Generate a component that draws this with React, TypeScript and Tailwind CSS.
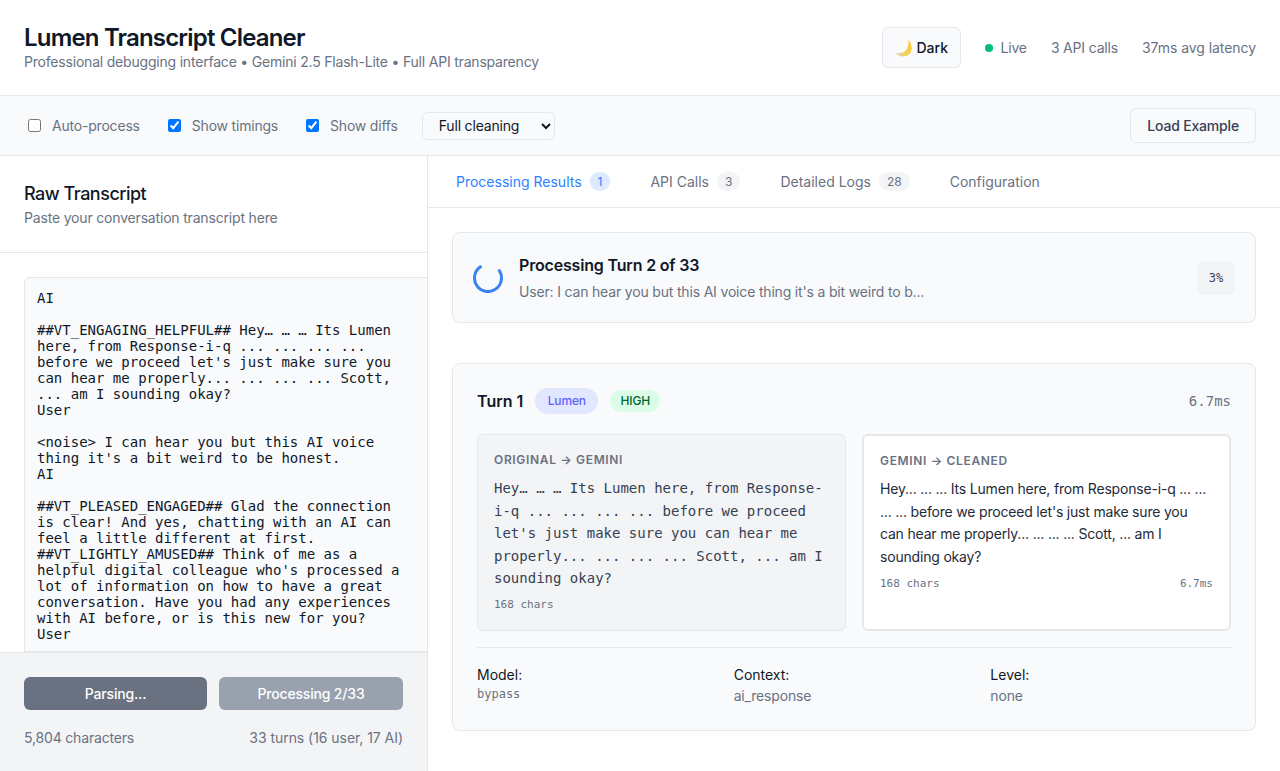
const transcript = `AI

##VT_ENGAGING_HELPFUL## Hey… … … Its Lumen here, from Response-i-q ... ... ... ... before we proceed let's just make sure you can hear me properly... ... ... ... Scott, ... am I sounding okay?
User

<noise> I can hear you but this AI voice thing it's a bit weird to be honest.
AI

##VT_PLEASED_ENGAGED## Glad the connection is clear! And yes, chatting with an AI can feel a little different at first. ##VT_LIGHTLY_AMUSED## Think of me as a helpful digital colleague who's processed a lot of information on how to have a great conversation. Have you had any experiences with AI before, or is this new for you?
User`;

const sans = "font-['Inter',sans-serif]";
const mono = "font-['DejaVu_Sans_Mono',monospace] tracking-normal";

function MoonIcon() {
  return (
    <svg width="18" height="18" viewBox="0 0 18 18" className="shrink-0">
      <defs>
        <linearGradient id="moon" x1="0" y1="1" x2="1" y2="0">
          <stop offset="0" stopColor="#d8d2bc" />
          <stop offset="0.4" stopColor="#f7cf5a" />
          <stop offset="1" stopColor="#ffc928" />
        </linearGradient>
      </defs>
      <path
        d="M13 .5C17.5 5 18 12 14 15.5 10 18.5 4 18 .5 14 5.500 15 9.500 13.500 11.500 10.500 13.500 8 14 4 13 .5Z"
        fill="url(#moon)"
      />
    </svg>
  );
}

function Spinner() {
  return (
    <svg width="30" height="30" viewBox="0 0 30 30" className="shrink-0">
      <circle
        cx="15"
        cy="15"
        r="13.5"
        fill="none"
        stroke="#3b82f6"
        strokeWidth="3"
        strokeLinecap="round"
        strokeDasharray="63 85"
        transform="rotate(-33 15 15)"
      />
    </svg>
  );
}

function Tab({ label, count, active }: { label: string; count?: number; active?: boolean }) {
  return (
    <div className={`flex items-center gap-2 text-sm tracking-normal ${active ? 'text-blue-500' : 'text-gray-500'}`}>
      <span>{label}</span>
      {count !== undefined && (
        <span className={`flex h-[19px] items-center rounded-full px-2 text-xs ${active ? 'bg-blue-100 text-blue-500' : 'bg-gray-100 text-gray-500'}`}>
          {count}
        </span>
      )}
    </div>
  );
}

function Check({ label, checked }: { label: string; checked?: boolean }) {
  return (
    <label className="flex items-center gap-2 text-sm tracking-[-0.2px] text-gray-500">
      <input type="checkbox" defaultChecked={checked} className="my-[3px] mr-[3px] ml-1 h-[13px] w-[13px]" />
      <span>{label}</span>
    </label>
  );
}

function Meta({ label, value, code }: { label: string; value: string; code?: boolean }) {
  return (
    <div>
      <div className="text-sm leading-[21px] tracking-normal text-gray-900">{label}</div>
      {code ? (
        <div className={`${mono} text-xs leading-[19px] text-gray-500`}>{value}</div>
      ) : (
        <div className="text-sm leading-[21px] text-gray-500">{value}</div>
      )}
    </div>
  );
}

export default function App() {
  return (
    <div className={`${sans} flex h-screen flex-col overflow-hidden bg-white tracking-[-0.011em] text-gray-900`}>
      {/* Header */}
      <header className="flex h-[96px] shrink-0 items-center justify-between border-b border-gray-200 px-6">
        <div className="pb-0.5">
          <h1 className="text-2xl leading-[30px] font-[570] tracking-[-0.82px] text-gray-900">Lumen Transcript Cleaner</h1>
          <p className="text-sm leading-[17px] tracking-[-0.2px] text-gray-500">
            Professional debugging interface • Gemini 2.5 Flash-Lite • Full API transparency
          </p>
        </div>
        <div className="flex items-center gap-6 text-sm text-gray-500">
          <button className="flex h-[41px] w-[79px] items-center gap-1 rounded-md border border-gray-200 bg-gray-50 pl-3 text-sm font-medium tracking-normal text-gray-900">
            <MoonIcon />
            <span>Dark</span>
          </button>
          <div className="flex items-center gap-2">
            <span className="h-2 w-2 rounded-full bg-emerald-500" />
            <span>Live</span>
          </div>
          <span>3 API calls</span>
          <span className="tracking-[-0.06px]">37ms avg latency</span>
        </div>
      </header>

      {/* Toolbar */}
      <div className="flex h-[60px] shrink-0 items-center justify-between border-b border-gray-200 bg-gray-50 px-6">
        <div className="flex items-center gap-6">
          <Check label="Auto-process" />
          <Check label="Show timings" checked />
          <Check label="Show diffs" checked />
          <select className="h-7 w-[133px] rounded-md border border-gray-200 bg-gray-50 px-3 text-sm text-gray-900">
            <option>Full cleaning</option>
          </select>
        </div>
        <button className="h-[35px] rounded-md border border-gray-200 bg-gray-50 px-4 text-sm font-medium text-gray-700">
          Load Example
        </button>
      </div>

      <div className="flex min-h-0 flex-1">
        {/* Left panel */}
        <aside className="flex w-[428px] shrink-0 flex-col overflow-hidden border-r border-gray-200">
          <div className="h-[97px] shrink-0 border-b border-gray-200 px-6 pt-6">
            <h2 className="text-lg leading-[28px] font-medium tracking-[-0.5px] text-gray-900">Raw Transcript</h2>
            <p className="text-sm leading-[20px] tracking-[-0.18px] text-gray-500">Paste your conversation transcript here</p>
          </div>
          <div className="min-h-0 flex-1 pt-6 pl-6">
            <textarea
              readOnly
              value={transcript}
              className={`${mono} block h-full w-[420px] resize-none overflow-hidden rounded-t-md border border-gray-200 bg-gray-50 pt-3 pr-9 pl-3 text-sm leading-4 text-gray-900 outline-none`}
            />
          </div>
          <div className="h-[119px] shrink-0 border-t border-gray-200 bg-gray-100 px-6 pt-6">
            <div className="flex gap-3">
              <button className="h-[33px] w-[183px] rounded-md bg-gray-500 text-sm font-medium text-white">Parsing...</button>
              <button className="h-[33px] flex-1 rounded-md bg-gray-400 text-sm font-medium text-white">Processing 2/33</button>
            </div>
            <div className="mt-[17px] flex justify-between text-sm leading-[21px] text-gray-500">
              <span>5,804 characters</span>
              <span className="tracking-[-0.05px]">33 turns (16 user, 17 AI)</span>
            </div>
          </div>
        </aside>

        {/* Right panel */}
        <main className="flex min-w-0 flex-1 flex-col">
          <div className="flex h-[52px] shrink-0 items-center gap-10 border-b border-gray-200 px-7">
            <Tab label="Processing Results" count={1} active />
            <Tab label="API Calls" count={3} />
            <Tab label="Detailed Logs" count={28} />
            <Tab label="Configuration" />
          </div>

          <div className="flex-1 overflow-hidden p-6">
            {/* Progress */}
            <div className="flex h-[91px] items-center rounded-lg border border-gray-200 bg-gray-50 px-5">
              <Spinner />
              <div className="ml-4 flex-1">
                <div className="text-base leading-6 font-semibold text-gray-900">Processing Turn 2 of 33</div>
                <div className="mt-1 text-sm leading-[21px] text-gray-500">
                  User: I can hear you but this AI voice thing it's a bit weird to b...
                </div>
              </div>
              <div className={`${mono} flex h-[34px] w-[38px] items-center justify-center rounded-md bg-gray-100 text-xs text-gray-700`}>3%</div>
            </div>

            {/* Turn card */}
            <div className="mt-10 rounded-lg border border-gray-200 bg-gray-50 px-6 pt-6 pb-6">
              <div className="flex h-[26px] items-center justify-between">
                <div className="flex items-center gap-3">
                  <span className="text-base font-semibold tracking-normal text-gray-900">Turn 1</span>
                  <span className="flex h-[26px] w-[63px] items-center justify-center rounded-full bg-indigo-100 text-xs font-medium text-indigo-500">Lumen</span>
                  <span className="flex h-[22px] w-[50px] items-center justify-center rounded-full bg-green-100 text-xs font-medium text-green-800">HIGH</span>
                </div>
                <span className={`${mono} text-sm text-gray-500`}>6.7ms</span>
              </div>

              <div className="mt-5 grid grid-cols-2 gap-4">
                <div className="h-[197px] rounded-md border border-gray-200 bg-gray-100 p-4">
                  <div className="text-xs leading-[18px] font-semibold tracking-[0.66px] text-gray-500">ORIGINAL → GEMINI</div>
                  <div className={`${mono} mt-[8.3px] text-sm leading-[22.4px] text-gray-700`}>
                    Hey… … … Its Lumen here, from Response-i-q ... ... ... ... before we proceed let's just make sure you can hear me properly... ... ... ... Scott, ... am I sounding okay?
                  </div>
                  <div className={`${mono} mt-[7.7px] text-[11px] leading-[16px] text-gray-500`}>168 chars</div>
                </div>
                <div className="h-[197px] rounded-md border-2 border-gray-200 bg-white p-4">
                  <div className="text-xs leading-[18px] font-semibold tracking-[0.66px] text-gray-500">GEMINI → CLEANED</div>
                  <div className="mt-[8.3px] text-sm leading-[22.4px] tracking-[-0.19px] text-gray-800">
                    Hey... ... ... Its Lumen here, from Response-i-q ... ... ... ... before we proceed let's just make sure you can hear me properly... ... ... ... Scott, ... am I sounding okay?
                  </div>
                  <div className={`${mono} mt-[7.7px] flex justify-between text-[11px] leading-[16px] text-gray-500`}>
                    <span>168 chars</span>
                    <span>6.7ms</span>
                  </div>
                </div>
              </div>

              <div className="mt-4 grid grid-cols-3 gap-4 border-t border-gray-200 pt-4">
                <Meta label="Model:" value="bypass" code />
                <Meta label="Context:" value="ai_response" />
                <Meta label="Level:" value="none" />
              </div>
            </div>
          </div>
        </main>
      </div>
    </div>
  );
}
